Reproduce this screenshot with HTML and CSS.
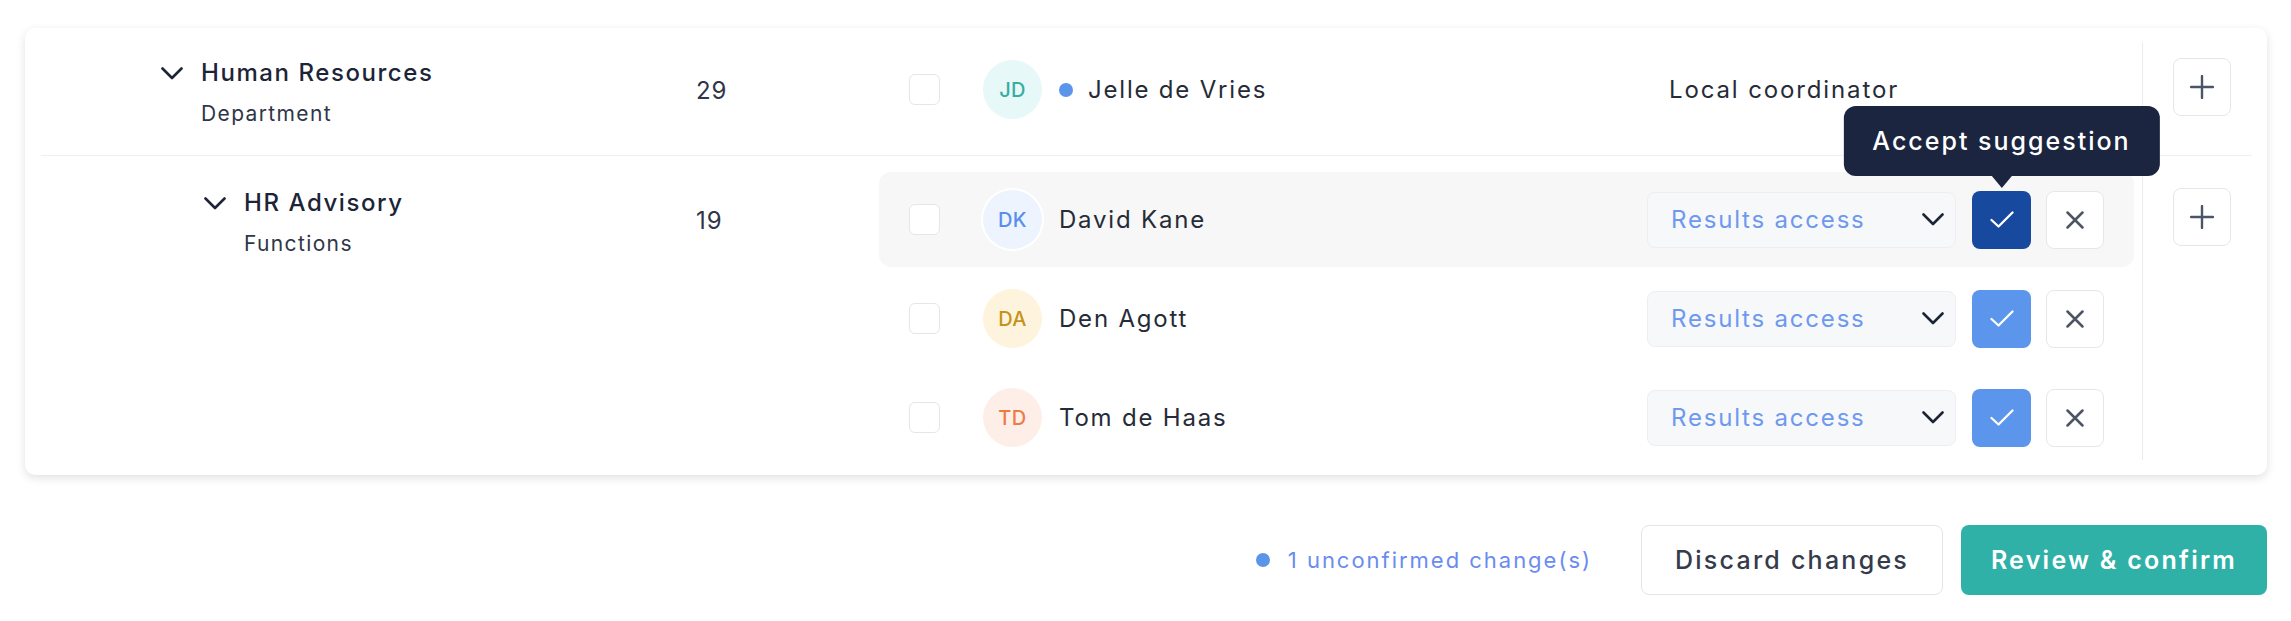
FILE: index.html
```html
<!DOCTYPE html>
<html lang="en">
<head>
<meta charset="utf-8">
<title>Access overview</title>
<link rel="stylesheet" href="styles.css">
</head>
<body>
<div class="page">
  <div class="card">
    <div class="section section--parent">
      <div class="section-main">
        <div class="tree-col tree-col--l1">
          <span class="tree-toggle">
            <svg width="22" height="13" viewBox="0 0 22 13"><path d="M1.5 1.5 L11 11 L20.5 1.5" fill="none" stroke="#1c2437" stroke-width="2.6" stroke-linecap="round" stroke-linejoin="round"/></svg>
          </span>
          <div class="tree-text">
            <div class="tree-title">Human Resources</div>
            <div class="tree-sub">Department</div>
          </div>
        </div>
        <div class="count-col">29</div>
        <div class="members">
          <div class="member-row">
            <span class="checkbox"></span>
            <span class="avatar avatar--teal">JD</span>
            <span class="status-dot"></span>
            <span class="member-name">Jelle de Vries</span>
            <div class="role"><span class="role-text">Local coordinator</span></div>
          </div>
        </div>
      </div>
      <div class="section-side">
        <button class="square-btn plus-btn" type="button">
          <svg width="24" height="24" viewBox="0 0 24 24"><path d="M12 1 V23 M1 12 H23" fill="none" stroke="#4b5568" stroke-width="2.4" stroke-linecap="round"/></svg>
        </button>
      </div>
    </div>

    <div class="section section--child">
      <div class="section-main">
        <div class="tree-col tree-col--l2">
          <span class="tree-toggle">
            <svg width="22" height="13" viewBox="0 0 22 13"><path d="M1.5 1.5 L11 11 L20.5 1.5" fill="none" stroke="#1c2437" stroke-width="2.6" stroke-linecap="round" stroke-linejoin="round"/></svg>
          </span>
          <div class="tree-text">
            <div class="tree-title">HR Advisory</div>
            <div class="tree-sub">Functions</div>
          </div>
        </div>
        <div class="count-col">19</div>
        <div class="members">
          <div class="member-row member-row--active">
            <span class="checkbox"></span>
            <span class="avatar avatar--blue">DK</span>
            <span class="member-name">David Kane</span>
            <div class="role">
              <div class="select"><span class="select-text">Results access</span>
                <svg width="22" height="13" viewBox="0 0 22 13"><path d="M1.5 1.5 L11 11 L20.5 1.5" fill="none" stroke="#1c2437" stroke-width="2.6" stroke-linecap="round" stroke-linejoin="round"/></svg>
              </div>
              <button class="square-btn accept-btn accept-btn--active" type="button">
                <svg width="24" height="17" viewBox="0 0 24 17"><path d="M1.5 9 L8.5 15.5 L22.5 1.5" fill="none" stroke="#ffffff" stroke-width="2.3" stroke-linecap="round" stroke-linejoin="round"/></svg>
                <span class="tooltip">Accept suggestion</span>
              </button>
              <button class="square-btn reject-btn" type="button">
                <svg width="18" height="18" viewBox="0 0 18 18"><path d="M1.5 1.5 L16.5 16.5 M16.5 1.5 L1.5 16.5" fill="none" stroke="#4b5563" stroke-width="2.5" stroke-linecap="round"/></svg>
              </button>
            </div>
          </div>
          <div class="member-row">
            <span class="checkbox"></span>
            <span class="avatar avatar--gold">DA</span>
            <span class="member-name">Den Agott</span>
            <div class="role">
              <div class="select"><span class="select-text">Results access</span>
                <svg width="22" height="13" viewBox="0 0 22 13"><path d="M1.5 1.5 L11 11 L20.5 1.5" fill="none" stroke="#1c2437" stroke-width="2.6" stroke-linecap="round" stroke-linejoin="round"/></svg>
              </div>
              <button class="square-btn accept-btn" type="button">
                <svg width="24" height="17" viewBox="0 0 24 17"><path d="M1.5 9 L8.5 15.5 L22.5 1.5" fill="none" stroke="#ffffff" stroke-width="2.3" stroke-linecap="round" stroke-linejoin="round"/></svg>
              </button>
              <button class="square-btn reject-btn" type="button">
                <svg width="18" height="18" viewBox="0 0 18 18"><path d="M1.5 1.5 L16.5 16.5 M16.5 1.5 L1.5 16.5" fill="none" stroke="#4b5563" stroke-width="2.5" stroke-linecap="round"/></svg>
              </button>
            </div>
          </div>
          <div class="member-row">
            <span class="checkbox"></span>
            <span class="avatar avatar--orange">TD</span>
            <span class="member-name">Tom de Haas</span>
            <div class="role">
              <div class="select"><span class="select-text">Results access</span>
                <svg width="22" height="13" viewBox="0 0 22 13"><path d="M1.5 1.5 L11 11 L20.5 1.5" fill="none" stroke="#1c2437" stroke-width="2.6" stroke-linecap="round" stroke-linejoin="round"/></svg>
              </div>
              <button class="square-btn accept-btn" type="button">
                <svg width="24" height="17" viewBox="0 0 24 17"><path d="M1.5 9 L8.5 15.5 L22.5 1.5" fill="none" stroke="#ffffff" stroke-width="2.3" stroke-linecap="round" stroke-linejoin="round"/></svg>
              </button>
              <button class="square-btn reject-btn" type="button">
                <svg width="18" height="18" viewBox="0 0 18 18"><path d="M1.5 1.5 L16.5 16.5 M16.5 1.5 L1.5 16.5" fill="none" stroke="#4b5563" stroke-width="2.5" stroke-linecap="round"/></svg>
              </button>
            </div>
          </div>
        </div>
      </div>
      <div class="section-side">
        <button class="square-btn plus-btn" type="button">
          <svg width="24" height="24" viewBox="0 0 24 24"><path d="M12 1 V23 M1 12 H23" fill="none" stroke="#4b5568" stroke-width="2.4" stroke-linecap="round"/></svg>
        </button>
      </div>
    </div>
  </div>

  <div class="footer">
    <span class="unconfirmed"><span class="unconfirmed-dot"></span>1 unconfirmed change(s)</span>
    <button class="btn btn--secondary" type="button">Discard changes</button>
    <button class="btn btn--primary" type="button">Review &amp; confirm</button>
  </div>
</div>
</body>
</html>
```

FILE: styles.css
```css
* { box-sizing: border-box; }

html, body {
  margin: 0;
  padding: 0;
  background: #ffffff;
}

body {
  font-family: Inter, "Open Sans", "Liberation Sans", sans-serif;
  color: #1c2437;
  letter-spacing: 0.058em;
}

.page {
  padding: 28px 24px 0 25px;
}

.card {
  background: #ffffff;
  border-radius: 10px;
  box-shadow: 0 3px 10px rgba(0, 0, 0, 0.12);
  padding: 14px 15px 10px 16px;
}

.section {
  display: flex;
}

.section--parent {
  border-bottom: 1px solid #efefef;
}

.section-main {
  flex: 1;
  display: flex;
  align-items: flex-start;
}

.section--parent .section-main { padding-bottom: 18px; }
.section--child .section-main { padding-top: 16px; }

.section-side {
  width: 110px;
  border-left: 1px solid #ececec;
  padding-left: 30px;
}

.section--parent .section-side { padding-top: 16px; }
.section--child .section-side { padding-top: 32px; margin-bottom: 5px; }

/* tree column */
.tree-col {
  width: 655px;
  display: flex;
  align-items: flex-start;
  padding-top: 13px;
}

.tree-col--l1 { padding-left: 120px; }
.tree-col--l2 { padding-left: 163px; }

.tree-toggle {
  width: 22px;
  height: 36px;
  margin-right: 18px;
  display: flex;
  align-items: center;
}

.tree-title {
  font-size: 24px;
  line-height: 36px;
  font-weight: 500;
  color: #1c2437;
  letter-spacing: 0.065em;
}

.tree-sub {
  font-size: 21px;
  line-height: 30px;
  margin-top: 8px;
  color: #2f3647;
  letter-spacing: 0.065em;
}

.count-col {
  width: 183px;
  padding-top: 31px;
  font-size: 24px;
  line-height: 36px;
  color: #2f3647;
}

/* members */
.members {
  flex: 1;
  margin-right: 8px;
  display: flex;
  flex-direction: column;
  gap: 4px;
}

.member-row {
  height: 95px;
  display: flex;
  align-items: center;
  padding: 0 30px;
  border-radius: 12px;
}

.member-row--active {
  background: #f7f7f7;
}

.checkbox {
  width: 31px;
  height: 31px;
  border: 1.5px solid #e4e6ea;
  border-radius: 6px;
  background: #ffffff;
  flex-shrink: 0;
}

.avatar {
  width: 59px;
  height: 59px;
  border-radius: 50%;
  margin-left: 43px;
  display: flex;
  align-items: center;
  justify-content: center;
  font-size: 20px;
  font-weight: 500;
  letter-spacing: 0.02em;
  flex-shrink: 0;
}

.avatar--teal { background: #e6f8f7; color: #38ada3; }
.avatar--blue { background: #edf4fe; color: #5b8def; box-shadow: 0 0 0 2px #ffffff; }
.avatar--gold { background: #fef4dd; color: #c5921a; }
.avatar--orange { background: #fdefe8; color: #ee7b46; }

.status-dot {
  width: 14px;
  height: 14px;
  border-radius: 50%;
  background: #5b95ea;
  margin-left: 17px;
  margin-right: -2px;
  flex-shrink: 0;
}

.member-name {
  margin-left: 17px;
  font-size: 24px;
  color: #262b38;
  letter-spacing: 0.075em;
}

.role {
  margin-left: auto;
  width: 457px;
  display: flex;
  align-items: center;
}

.role-text {
  padding-left: 22px;
  font-size: 24px;
  color: #262b38;
  letter-spacing: 0.078em;
}

.select {
  width: 309px;
  height: 56px;
  background: #f7f8f9;
  border: 1.5px solid #eceef1;
  border-radius: 8px;
  display: flex;
  align-items: center;
  justify-content: space-between;
  padding: 0 11px 0 23px;
}

.select-text {
  font-size: 24px;
  color: #6e99ef;
  letter-spacing: 0.075em;
}

.square-btn {
  width: 58px;
  height: 58px;
  border-radius: 8px;
  display: flex;
  align-items: center;
  justify-content: center;
  padding: 0;
  font-family: inherit;
  cursor: pointer;
}

.accept-btn {
  position: relative;
  width: 59px;
  margin-left: 16px;
  border: none;
  background: #5b95ec;
}

.accept-btn--active {
  background: #174a9e;
}

.reject-btn {
  margin-left: 15px;
  background: #ffffff;
  border: 1.5px solid #e5e7eb;
}

.plus-btn {
  background: #ffffff;
  border: 1.5px solid #e5e7eb;
}

.tooltip {
  position: absolute;
  bottom: calc(100% + 15px);
  left: 50%;
  transform: translateX(-50%);
  height: 70px;
  line-height: 70px;
  padding: 0 29px;
  background: #1b2540;
  color: #ffffff;
  border-radius: 12px;
  font-size: 25px;
  font-weight: 500;
  letter-spacing: 0.08em;
  white-space: nowrap;
}

.tooltip::after {
  content: "";
  position: absolute;
  top: 100%;
  left: 50%;
  margin-left: -10px;
  border-left: 10px solid transparent;
  border-right: 10px solid transparent;
  border-top: 12px solid #1b2540;
}

/* footer */
.footer {
  margin-top: 50px;
  display: flex;
  justify-content: flex-end;
  align-items: center;
}

.unconfirmed {
  display: flex;
  align-items: center;
  font-size: 22px;
  color: #6a8cf0;
  letter-spacing: 0.09em;
  margin-right: 49px;
}

.unconfirmed-dot {
  width: 14px;
  height: 14px;
  border-radius: 50%;
  background: #5b95ea;
  margin-right: 18px;
}

.btn {
  height: 70px;
  border-radius: 8px;
  font-family: inherit;
  font-size: 25px;
  font-weight: 500;
  letter-spacing: 0.09em;
  cursor: pointer;
}

.btn--secondary {
  width: 302px;
  background: #ffffff;
  border: 1.5px solid #e2e5ea;
  color: #353b4a;
  margin-right: 18px;
}

.btn--primary {
  width: 306px;
  background: #2fb1a8;
  border: none;
  color: #ffffff;
  font-weight: 600;
}
```
